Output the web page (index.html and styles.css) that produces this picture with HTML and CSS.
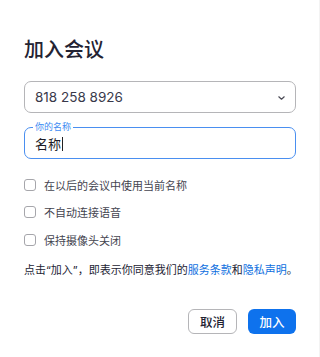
FILE: index.html
```html
<!DOCTYPE html>
<html lang="zh-CN">
<head>
<meta charset="utf-8">
<link rel="stylesheet" href="styles.css">
</head>
<body>
<div class="dialog">
  <h1 class="title">加入会议</h1>
  <div class="select">
    <span class="select-value">818 258 8926</span>
    <svg class="chevron" width="7" height="4" viewBox="0 0 7 4"><polyline points="0.8,0.8 3.5,3.2 6.2,0.8" fill="none" stroke="#4a4a55" stroke-width="1.2" stroke-linecap="round" stroke-linejoin="round"/></svg>
  </div>
  <div class="field">
    <span class="field-label">你的名称</span>
    <span class="field-value">名称</span><span class="caret"></span>
  </div>
  <div class="options">
    <label class="option"><span class="box"></span><span>在以后的会议中使用当前名称</span></label>
    <label class="option"><span class="box"></span><span>不自动连接语音</span></label>
    <label class="option"><span class="box"></span><span>保持摄像头关闭</span></label>
  </div>
  <p class="terms">点击“加入”，即表示你同意我们的<a class="link">服务条款</a>和<a class="link">隐私声明</a>。</p>
  <div class="actions">
    <button class="btn btn-cancel">取消</button>
    <button class="btn btn-join">加入</button>
  </div>
</div>
</body>
</html>
```
FILE: styles.css
```css
html, body {
  margin: 0;
  padding: 0;
  background: #ffffff;
}
body {
  font-family: Inter, "Noto Sans CJK SC", sans-serif;
  color: #232333;
}
.dialog {
  box-sizing: border-box;
  width: 320px;
  height: 357px;
  padding: 36px 23px 0 24px;
  border-right: 1px solid #f3f3f3;
  display: flex;
  flex-direction: column;
}
.title {
  margin: 0;
  font-size: 20px;
  line-height: 28px;
  font-weight: 500;
  color: #232333;
}
.select {
  box-sizing: border-box;
  margin-top: 17px;
  height: 32px;
  border: 1px solid #b5b5b8;
  border-radius: 7px;
  display: flex;
  align-items: center;
  justify-content: space-between;
  padding: 0 10px 0 10px;
}
.select-value {
  font-size: 13.5px;
  color: #39394a;
}
.chevron {
  display: block;
  margin-top: 1px;
}
.field {
  position: relative;
  box-sizing: border-box;
  margin-top: 14px;
  height: 32px;
  border: 1px solid #4a8ff0;
  border-radius: 7px;
  display: flex;
  align-items: center;
  padding: 2px 10px 0 10px;
}
.field-label {
  position: absolute;
  left: 8px;
  top: -7px;
  padding: 0 2px;
  background: #ffffff;
  font-size: 9px;
  line-height: 12px;
  color: #3d8bf2;
}
.field-value {
  font-size: 13px;
  color: #1c1c28;
  line-height: 16px;
}
.caret {
  display: inline-block;
  width: 1px;
  height: 14px;
  background: #222;
  margin-left: 1px;
}
.options {
  margin-top: 12px;
  display: flex;
  flex-direction: column;
}
.option {
  height: 27.5px;
  display: flex;
  align-items: center;
  gap: 8px;
  font-size: 11px;
  color: #44444f;
}
.box {
  box-sizing: border-box;
  width: 12px;
  height: 12px;
  border: 1px solid #a6a6ab;
  border-radius: 3px;
  background: #fff;
}
.terms {
  margin: 8.5px 0 0 0;
  font-size: 11px;
  line-height: 16px;
  color: #232333;
  white-space: nowrap;
}
.link {
  color: #0e6fe0;
}
.actions {
  margin-top: 31px;
  display: flex;
  justify-content: flex-end;
  gap: 11px;
}
.btn {
  box-sizing: border-box;
  height: 25px;
  border-radius: 6px;
  font-family: Inter, "Noto Sans CJK SC", sans-serif;
  font-size: 12.5px;
  font-weight: 500;
  padding: 0;
  display: flex;
  align-items: center;
  justify-content: center;
}
.btn-cancel {
  width: 49px;
  border: 1px solid #b5b5b8;
  background: #fff;
  color: #232333;
}
.btn-join {
  width: 48px;
  border: none;
  background: #0e72ed;
  color: #ffffff;
}
```
